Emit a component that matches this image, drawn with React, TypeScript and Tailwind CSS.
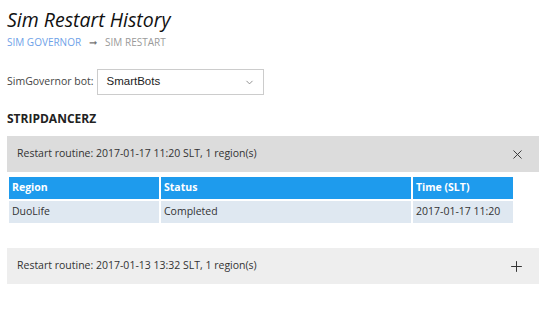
import { X, Plus, ChevronDown } from 'lucide-react'

const font = { fontFamily: '"Open Sans", "Noto Sans", sans-serif' }

interface Routine {
  label: string
  open: boolean
}

const routines: Routine[] = [
  { label: 'Restart routine: 2017-01-17 11:20 SLT, 1 region(s)', open: true },
  { label: 'Restart routine: 2017-01-13 13:32 SLT, 1 region(s)', open: false },
]

export default function App() {
  return (
    <div className="min-h-[323px] w-[546px] bg-white px-[7px] pt-[7px] text-[#333]" style={font}>
      <h1 className="text-[19.5px] italic leading-[26px] text-[#111]">Sim Restart History</h1>
      <div className="mt-[2px] flex items-center gap-[8px] text-[10px] uppercase leading-[14px]">
        <span className="text-[#6ea2e8]">Sim Governor</span>
        <span className="text-[#777]">➞</span>
        <span className="text-[#9a9a9a]">Sim Restart</span>
      </div>

      <div className="mt-[20px] flex items-center gap-[3px]">
        <span className="text-[10.5px] text-[#444]">SimGovernor bot:</span>
        <div className="flex h-[26px] w-[167px] items-center justify-between border border-[#ccc] bg-white pl-[9px] pr-[8px]">
          <span className="text-[11.5px] text-[#222]" style={{ fontFamily: '"Liberation Sans", Arial, sans-serif' }}>
            SmartBots
          </span>
          <ChevronDown size={11} strokeWidth={2} className="text-[#888]" />
        </div>
      </div>

      <h2 className="mt-[16px] text-[12px] font-bold leading-[16px] text-[#222]">STRIPDANCERZ</h2>

      <div className="mt-[9px] flex flex-col">
        {routines.map((r) => (
          <div key={r.label} className={r.open ? '' : 'mt-[23px]'}>
            <div
              className={`flex h-[36px] items-center justify-between pl-[10px] pr-[14px] ${
                r.open ? 'bg-[#dcdcdc]' : 'bg-[#eeeeee]'
              }`}
            >
              <span className="text-[10.5px] text-[#333]">{r.label}</span>
              {r.open ? (
                <X size={15} strokeWidth={1.5} className="text-[#333]" />
              ) : (
                <Plus size={17} strokeWidth={1.4} className="text-[#333]" />
              )}
            </div>
            {r.open ? (
              <table className="mt-[3px] w-[508px] border-separate border-spacing-[2px] text-[10.5px]">
                <thead>
                  <tr className="bg-[#1e9bed] text-left text-white">
                    <th className="h-[22px] w-[150px] px-[3px] font-bold">Region</th>
                    <th className="h-[22px] px-[3px] font-bold">Status</th>
                    <th className="h-[22px] w-[100px] px-[3px] font-bold">Time (SLT)</th>
                  </tr>
                </thead>
                <tbody>
                  <tr className="bg-[#dfe8f1] text-[#333]">
                    <td className="h-[22px] px-[3px]">DuoLife</td>
                    <td className="h-[22px] px-[3px]">Completed</td>
                    <td className="h-[22px] px-[3px]">2017-01-17 11:20</td>
                  </tr>
                </tbody>
              </table>
            ) : null}
          </div>
        ))}
      </div>
    </div>
  )
}
